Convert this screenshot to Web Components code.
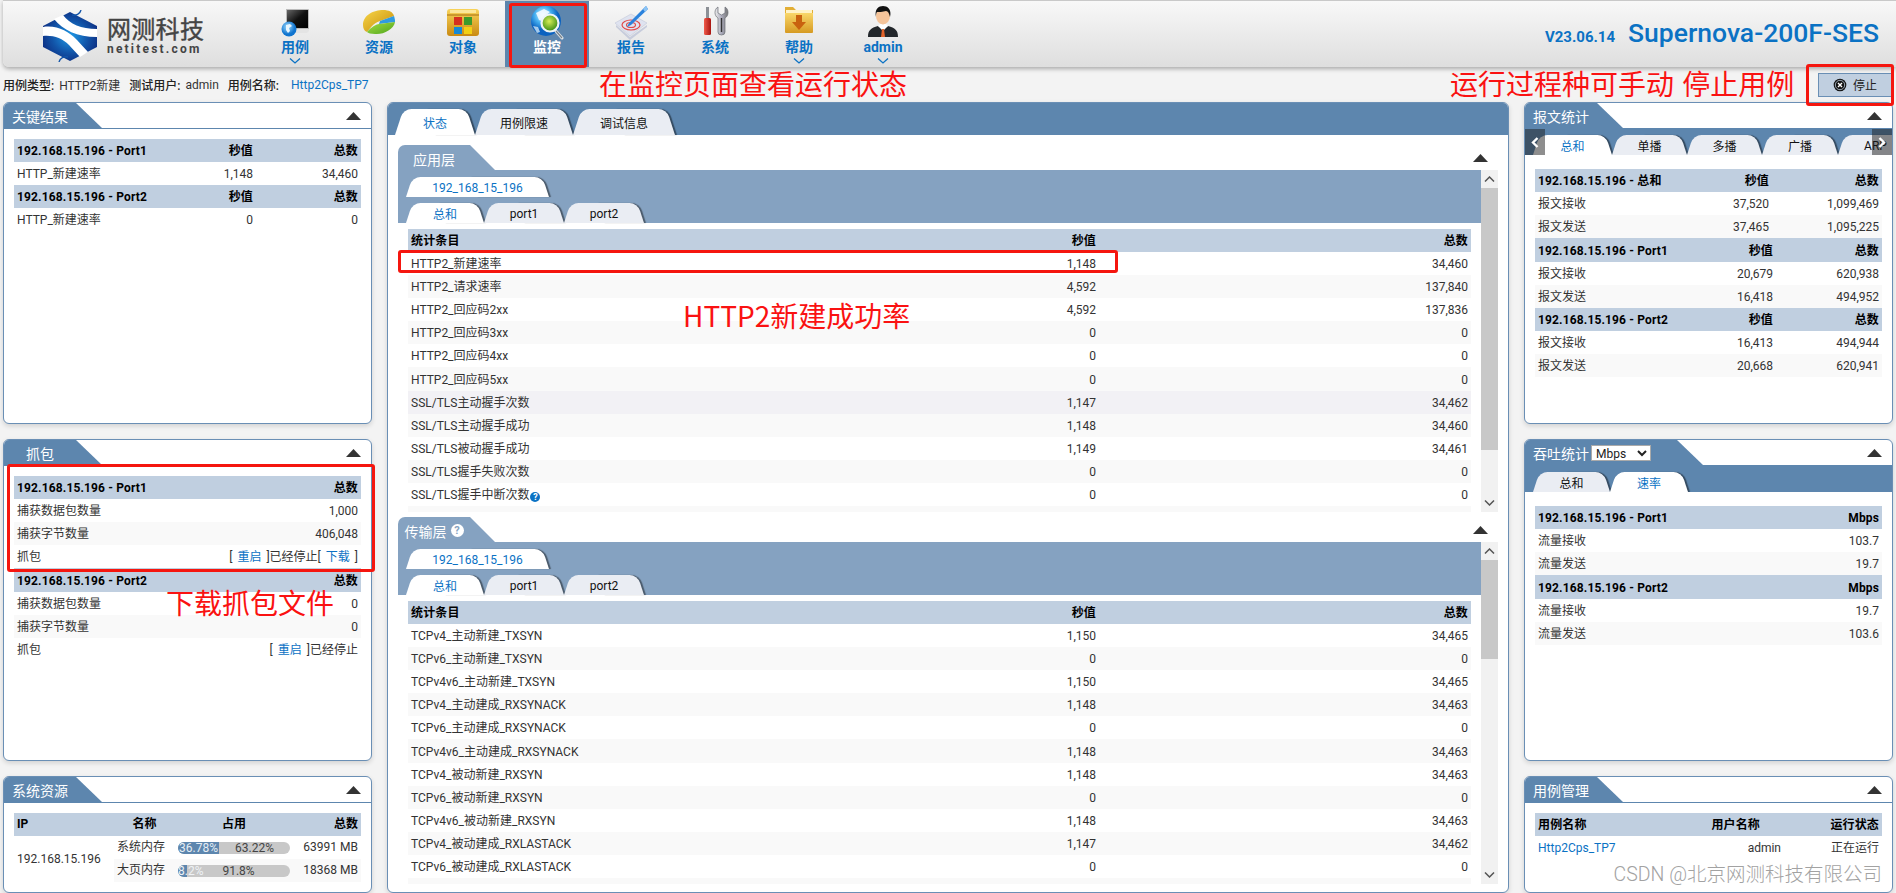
<!DOCTYPE html>
<html lang="zh-CN">
<head>
<meta charset="utf-8">
<title>Supernova</title>
<style>
  html, body { margin: 0; height: 893px; overflow: hidden; }
  body {
    position: relative;
    background: #f3f3f3;
    color: #333;
    font: 12px Roboto, "Noto Sans CJK SC", sans-serif;
  }
  .main {
    display: grid;
    grid-template-columns: 369px 1fr 369px;
    column-gap: 15px;
    padding: 0 3px;
    height: 791px;
  }
  .side {
    display: grid;
    grid-template-rows: 322px 322px 117px;
    row-gap: 15px;
    min-height: 0;
  }
  .tabrow { display: flex; }
  .mbps {
    width: 60px; height: 16px; margin-left: 2px; padding: 0;
    font: 12px Roboto, sans-serif; color: #222; background: #fff;
    border: 1px solid #aaa; border-radius: 0;
  }
</style>
</head>
<body>

<nt-header>
  <nav-item icon="case" label="用例" chevron></nav-item>
  <nav-item icon="pie" label="资源"></nav-item>
  <nav-item icon="box" label="对象"></nav-item>
  <nav-item icon="monitor" label="监控" active></nav-item>
  <nav-item icon="report" label="报告"></nav-item>
  <nav-item icon="tools" label="系统"></nav-item>
  <nav-item icon="folder" label="帮助" chevron></nav-item>
  <nav-item icon="user" label="admin" chevron></nav-item>
</nt-header>

<info-bar></info-bar>

<div class="main">
  <div class="side">
    <nt-panel heading="关键结果">
      <stat-table cols="1fr 60px 105px" rows="#192.168.15.196 - Port1|秒值|总数
HTTP_新建速率|1,148|34,460
#192.168.15.196 - Port2|秒值|总数
HTTP_新建速率|0|0"></stat-table>
    </nt-panel>
    <nt-panel heading="抓包">
      <stat-table cols="1fr 150px" rows="#192.168.15.196 - Port1|总数
捕获数据包数量|1,000
捕获字节数量|406,048
抓包|[<a class=m>重启</a>]已经停止[<a class=m>下载</a>]"></stat-table>
      <stat-table cols="1fr 150px" head-h="24" rows="#192.168.15.196 - Port2|总数
捕获数据包数量|0
捕获字节数量|0
抓包|[<a class=m>重启</a>]已经停止"></stat-table>
    </nt-panel>
    <nt-panel heading="系统资源">
      <sys-table></sys-table>
    </nt-panel>
  </div>

  <nt-tabpanel>
    <nt-tab slot="tabs" big active style="width:80px">状态</nt-tab>
    <nt-tab slot="tabs" big style="width:98px">用例限速</nt-tab>
    <nt-tab slot="tabs" big style="width:102px">调试信息</nt-tab>

    <nt-section heading="应用层">
      <div class="tabrow" slot="tabs"><nt-tab active style="width:143px">192_168_15_196</nt-tab></div>
      <div class="tabrow" slot="tabs">
        <nt-tab active style="width:78px">总和</nt-tab><nt-tab style="width:80px">port1</nt-tab><nt-tab style="width:80px">port2</nt-tab>
      </div>
      <stat-table cols="1fr 60px 372px" row-h="23.1" rows="#统计条目|秒值|总数
HTTP2_新建速率|1,148|34,460
HTTP2_请求速率|4,592|137,840
HTTP2_回应码2xx|4,592|137,836
HTTP2_回应码3xx|0|0
HTTP2_回应码4xx|0|0
HTTP2_回应码5xx|0|0
~SSL/TLS主动握手次数|1,147|34,462
SSL/TLS主动握手成功|1,148|34,460
SSL/TLS被动握手成功|1,149|34,461
SSL/TLS握手失败次数|0|0
SSL/TLS握手中断次数<i>?</i>|0|0
&nbsp;||"></stat-table>
    </nt-section>

    <nt-section heading="传输层" help thumb="99">
      <div class="tabrow" slot="tabs"><nt-tab active style="width:143px">192_168_15_196</nt-tab></div>
      <div class="tabrow" slot="tabs">
        <nt-tab active style="width:78px">总和</nt-tab><nt-tab style="width:80px">port1</nt-tab><nt-tab style="width:80px">port2</nt-tab>
      </div>
      <stat-table cols="1fr 60px 372px" row-h="23.1" rows="#统计条目|秒值|总数
TCPv4_主动新建_TXSYN|1,150|34,465
TCPv6_主动新建_TXSYN|0|0
TCPv4v6_主动新建_TXSYN|1,150|34,465
TCPv4_主动建成_RXSYNACK|1,148|34,463
TCPv6_主动建成_RXSYNACK|0|0
TCPv4v6_主动建成_RXSYNACK|1,148|34,463
TCPv4_被动新建_RXSYN|1,148|34,463
TCPv6_被动新建_RXSYN|0|0
TCPv4v6_被动新建_RXSYN|1,148|34,463
TCPv4_被动建成_RXLASTACK|1,147|34,462
TCPv6_被动建成_RXLASTACK|0|0
&nbsp;||"></stat-table>
    </nt-section>
  </nt-tabpanel>

  <div class="side">
    <nt-panel heading="报文统计" banded>
      <nt-tab slot="band" active style="width:79px">总和</nt-tab>
      <nt-tab slot="band" style="width:75px">单播</nt-tab>
      <nt-tab slot="band" style="width:75px">多播</nt-tab>
      <nt-tab slot="band" style="width:76px">广播</nt-tab>
      <nt-tab slot="band" style="width:75px">ARP</nt-tab>
      <nt-arrow slot="band" dir="left"></nt-arrow>
      <nt-arrow slot="band" dir="right"></nt-arrow>
      <stat-table cols="1fr 60px 110px" rows="#192.168.15.196 - 总和|秒值|总数
报文接收|37,520|1,099,469
报文发送|37,465|1,095,225"></stat-table>
      <stat-table cols="1fr 60px 106px" head-h="24" rows="#192.168.15.196 - Port1|秒值|总数
报文接收|20,679|620,938
报文发送|16,418|494,952"></stat-table>
      <stat-table cols="1fr 60px 106px" rows="#192.168.15.196 - Port2|秒值|总数
报文接收|16,413|494,944
报文发送|20,668|620,941"></stat-table>
    </nt-panel>
    <nt-panel heading="吞吐统计" banded style="--title-w:178px;--title-pr:44px">
      <select slot="extra" class="mbps"><option>Mbps</option></select>
      <nt-tab slot="band" style="width:77px">总和</nt-tab>
      <nt-tab slot="band" active style="width:78px">速率</nt-tab>
      <stat-table cols="1fr 100px" rows="#192.168.15.196 - Port1|Mbps
流量接收|103.7
流量发送|19.7"></stat-table>
      <stat-table cols="1fr 100px" head-h="24" rows="#192.168.15.196 - Port2|Mbps
流量接收|19.7
流量发送|103.6"></stat-table>
    </nt-panel>
    <nt-panel heading="用例管理">
      <stat-table cols="1fr 60px 119px" rows="#用例名称|用户名称|运行状态"></stat-table>
      <stat-table cols="1fr 60px 98px" rows="<a>Http2Cps_TP7</a>|admin|正在运行"></stat-table>
    </nt-panel>
  </div>
</div>

<red-box style="left:509px;top:3px;width:72px;height:59px"></red-box>
<red-box style="left:1806px;top:64px;width:82px;height:36px"></red-box>
<red-box style="left:398px;top:250px;width:714px;height:17px"></red-box>
<red-box style="left:7px;top:464px;width:362px;height:102px"></red-box>

<red-note style="left:599px;top:83px">在监控页面查看运行状态</red-note>
<red-note style="left:1450px;top:83px;word-spacing:2px">运行过程种可手动 停止用例</red-note>
<red-note style="left:683px;top:315px">HTTP2新建成功率</red-note>
<red-note style="left:166px;top:602px">下载抓包文件</red-note>
<water-mark>CSDN @北京网测科技有限公司</water-mark>

<script>
const BLUE = '#5d86ae'
const LINK = '#0b72c4'

const ICONS = {
  case: `<defs><linearGradient id="s" x1="0" y1="0" x2="1" y2="1"><stop offset="0" stop-color="#666"/><stop offset=".5" stop-color="#111"/><stop offset="1" stop-color="#000"/></linearGradient>
      <radialGradient id="g" cx=".4" cy=".35"><stop offset="0" stop-color="#9fdcff"/><stop offset="1" stop-color="#0f74cf"/></radialGradient></defs>
    <path d="M12 29h20l2-2v-3H12z" fill="#e4e4e4"/><path d="M11 5h22q1 0 1 1v19H11z" fill="#bbb"/><path d="M12 6h21v18H12z" fill="url(#s)"/>
    <circle cx="14" cy="25" r="7.5" fill="url(#g)"/><path d="M11 21l4-1 2 2-3 2 1 3-2 2-2-3z" fill="#e8f6ff"/>`,
  pie: `<defs><linearGradient id="y" x1="0" y1="0" x2="1" y2="1"><stop offset="0" stop-color="#f7d64a"/><stop offset="1" stop-color="#c58a06"/></linearGradient>
      <linearGradient id="v" x1="0" y1="0" x2="1" y2="1"><stop offset="0" stop-color="#a6dd45"/><stop offset="1" stop-color="#4ea51a"/></linearGradient></defs>
    <path d="M4 21C4 11 15 6 24 6c6 0 10 2 11 6L21 17c-7 2-11 9-13 11-3-1-4-4-4-7z" fill="url(#y)"/>
    <path d="M35 12c1 3 1 4 1 6l-16 2 1-3z" fill="#2f9be0"/>
    <path d="M20 20l16-2c-1 7-12 13-20 12-4 0-7-1-8-2 2-2 6-7 12-8z" fill="url(#v)"/>`,
  box: `<defs><linearGradient id="b" x1="0" y1="0" x2="0" y2="1"><stop offset="0" stop-color="#f8d35a"/><stop offset="1" stop-color="#c98a12"/></linearGradient></defs>
    <path d="M7 5h26q3 0 3 3v21q0 3-3 3H7q-3 0-3-3V8q0-3 3-3z" fill="url(#b)"/><path d="M4 11h32" stroke="#a66f10" stroke-width="1"/><path d="M7 6h26v3H7z" fill="#fbe79a"/>
    <path d="M11 13h8v8h-8z" fill="#d5301f"/><path d="M21 13h8v8h-8z" fill="#3b9a2b"/><path d="M11 23h8v7h-8z" fill="#1689d6"/><path d="M21 23h8v7h-8z" fill="#f2d015"/>`,
  monitor: `<defs><radialGradient id="g" cx=".4" cy=".3"><stop offset="0" stop-color="#e6f7ff"/><stop offset=".55" stop-color="#45b0f0"/><stop offset="1" stop-color="#0b62c0"/></radialGradient>
      <radialGradient id="l" cx=".45" cy=".4"><stop offset="0" stop-color="#d8ee55"/><stop offset="1" stop-color="#4f9a1c"/></radialGradient></defs>
    <circle cx="19" cy="17" r="15" fill="url(#g)"/><path d="M9 9l8-4 6 3-5 4-1 6-5-2z" fill="#f4fbff" opacity=".9"/><path d="M6 22l5 1 2 5-3 1z" fill="#e6f6ff" opacity=".7"/>
    <path d="M28 26l7 8" stroke="#dfe4e8" stroke-width="3" stroke-linecap="round"/><path d="M29 27l6 7" stroke="#77838c" stroke-width="1.2"/><circle cx="23" cy="19" r="8.5" fill="url(#l)" stroke="#eef4f8" stroke-width="2.2"/>`,
  report: `<path d="M4 19L20 10l16 9-17 13z" fill="#dfe3f0" stroke="#c3c8d8" stroke-width=".6"/><path d="M5 21l14 12 17-12v2L19 36 5 23z" fill="#c7ccdc"/>
    <ellipse cx="20" cy="21" rx="9" ry="5" fill="none" stroke="#e04a4a" stroke-width="1.2"/><ellipse cx="20" cy="21" rx="4.5" ry="2.5" fill="none" stroke="#e04a4a" stroke-width="1.2"/>
    <path d="M35 2l2 3-17 16-4 2 2-4z" fill="#2b82dc"/><path d="M35 2l2 3-3 3-2-3z" fill="#8cc4f5"/>`,
  tools: `<defs><linearGradient id="m" x1="0" x2="1"><stop offset="0" stop-color="#eee"/><stop offset=".5" stop-color="#aab"/><stop offset="1" stop-color="#777"/></linearGradient>
      <linearGradient id="r" x1="0" x2="1"><stop offset="0" stop-color="#f05a4a"/><stop offset="1" stop-color="#a81410"/></linearGradient></defs>
    <rect x="11" y="3" width="3" height="12" fill="#8c9096"/><rect x="9" y="14" width="7" height="17" rx="1.5" fill="url(#r)"/>
    <path d="M23 3c-4 2-4 9 0 11v14q0 3 3.5 3t3.5-3V14c4-2 4-9 0-11v6l-3.5 2-3.5-2z" fill="url(#m)" stroke="#6a6f76" stroke-width=".7"/><path d="M26.5 14v14" stroke="#333" stroke-width="1.4"/>`,
  folder: `<defs><linearGradient id="f" x1="0" y1="0" x2="0" y2="1"><stop offset="0" stop-color="#f9d76a"/><stop offset="1" stop-color="#d69a22"/></linearGradient></defs>
    <path d="M6 3h8l3 3h17v6H6z" fill="#e2ae35"/><path d="M7 6h26v5H7z" fill="#fff3c8"/><path d="M6 9h28v19q0 1-1 1H7q-1 0-1-1z" fill="url(#f)"/>
    <path d="M17 11h6v7h4l-7 8-7-8h4z" fill="#c9620f"/>`,
  user: `<path d="M5 33c0-7 3-9 10-11l5 3 5-3c7 2 10 4 10 11z" fill="#23272b"/><path d="M15 22l5 5 5-5-2-2h-6z" fill="#fff"/><path d="M19 25h2l1 8h-4z" fill="#e2632a"/>
    <ellipse cx="20" cy="12" rx="7" ry="8.5" fill="#f5c49a"/><path d="M13 13c-2-8 3-11 7-11s9 3 7 11c-1-4-2-6-4-6-3 1-8 1-9 1-1 1-1 3-1 5z" fill="#111"/>`
}

class NavItem extends HTMLElement {
  constructor() {
    super()
    this.attachShadow({mode: 'open'})
  }
  connectedCallback() {
    const chevron = this.hasAttribute('chevron')
      ? `<svg class="chev" width="12" height="6" viewBox="0 0 12 6"><path d="M1 .5l5 4.5 5-4.5" fill="none" stroke="${LINK}" stroke-width="1.3"/></svg>` : ''
    this.shadowRoot.innerHTML = `
      <style>
        :host { display: block; position: relative; width: 84px; height: 66px; text-align: center; color: ${LINK}; }
        :host([active]) { background: ${BLUE}; color: #fff; }
        .icon { display: block; margin: 3px auto 0; }
        .label { display: block; margin-top: -2px; font-size: 14px; font-weight: 700; line-height: 19px; }
        .chev { display: block; margin: 1px auto 0; }
      </style>
      <svg class="icon" width="40" height="36" viewBox="0 0 40 36">${ICONS[this.getAttribute('icon')]}</svg>
      <span class="label">${this.getAttribute('label')}</span>${chevron}`
  }
}

class NtHeader extends HTMLElement {
  constructor() {
    super()
    this.attachShadow({mode: 'open'})
    this.shadowRoot.innerHTML = `
      <style>
        :host {
          display: flex; position: relative; z-index: 1; height: 66px; margin-left: 3px;
          background: linear-gradient(#f8f8f8, #dedede);
          border-top: 1px solid #c9c9c9; border-bottom-left-radius: 6px;
          box-shadow: 0 2px 4px rgba(0,0,0,.3);
        }
        .logo { display: flex; flex: none; width: 210px; padding: 9px 0 0 40px; }
        .logo svg { flex: none; }
        .brand { margin-left: 10px; color: #444; }
        .cn { font: 400 24px/26px "Noto Sans CJK SC", sans-serif; letter-spacing: .3px; margin-top: 5px; white-space: nowrap; -webkit-text-stroke: .4px #444; }
        .en { font: 700 12px/12px Roboto, sans-serif; letter-spacing: 2.2px; margin-top: 2px; white-space: nowrap; }
        nav { display: flex; }
        .ver { margin-left: auto; padding: 16px 17px 0 0; color: ${LINK}; white-space: nowrap; font-family: Roboto, sans-serif; }
        .ver b { font-size: 15px; margin-right: 13px; }
        .ver span { font-size: 26.5px; font-weight: 500; }
      </style>
      <div class="logo">
        <svg width="54" height="52" viewBox="0 0 54 52">
          <defs><radialGradient id="h" cx=".5" cy=".5" r=".55"><stop offset="0" stop-color="#1f9ce8"/><stop offset=".6" stop-color="#1254a8"/><stop offset="1" stop-color="#0d2f83"/></radialGradient></defs>
          <path d="M27 2l27 14v21L27 51 0 37V16z" fill="url(#h)"/>
          <path d="M0 17c14-2 25 4 34 13l11 12-8 5-11-12C19 28 10 25 0 26z" fill="#fff"/>
          <path d="M11 9l9-4c7 9 18 14 34 14v8C34 27 20 20 11 9z" fill="#fff"/>
          <path d="M29 5c4 1 8-1 9-5M25 47c-4-1-8 1-9 5" fill="none" stroke="#1254a8" stroke-width="1.4"/>
        </svg>
        <div class="brand"><div class="cn">网测科技</div><div class="en">netitest.com</div></div>
      </div>
      <nav><slot></slot></nav>
      <div class="ver"><b>V23.06.14</b><span>Supernova-200F-SES</span></div>`
  }
}

class InfoBar extends HTMLElement {
  constructor() {
    super()
    this.attachShadow({mode: 'open'})
    this.shadowRoot.innerHTML = `
      <style>
        :host { display: flex; align-items: center; height: 35px; padding: 0 4px 0 3px; font-size: 12px; color: #333; white-space: nowrap; }
        b { font-weight: 500; color: #222; }
        span { margin-left: 5px; }
        .next { margin-left: 9px; }
        a { margin-left: 12px; color: ${LINK}; }
        button {
          display: flex; align-items: center; gap: 6px; margin-left: auto; width: 74px; height: 24px; padding: 0 0 0 14px;
          background: #c0cfe0; border: 1px solid #6a8fb5; color: #222; font: 12px Roboto, "Noto Sans CJK SC", sans-serif;
        }
      </style>
      <b>用例类型:</b><span>HTTP2新建</span>
      <b class="next">测试用户:</b><span>admin</span>
      <b class="next">用例名称:</b><a>Http2Cps_TP7</a>
      <button>
        <svg width="14" height="14" viewBox="0 0 14 14"><circle cx="7" cy="7" r="6.3" fill="#111"/><circle cx="7" cy="7" r="4.7" fill="none" stroke="#c0cfe0" stroke-width=".8"/><path d="M5 5l4 4m0-4l-4 4" stroke="#fff" stroke-width="1.4"/></svg>
        停止
      </button>`
  }
}

const TRIANGLE = `<svg class="tri" width="15" height="8" viewBox="0 0 15 8"><path d="M7.5 0L15 8H0z" fill="#333"/></svg>`

class NtPanel extends HTMLElement {
  constructor() {
    super()
    this.attachShadow({mode: 'open'})
  }
  connectedCallback() {
    this.shadowRoot.innerHTML = `
      <style>
        :host {
          display: flex; flex-direction: column; min-height: 0; overflow: hidden; box-sizing: border-box;
          background: #fff; border: 1px solid #6a8fb5; border-radius: 6px;
          box-shadow: 0 2px 5px rgba(0,0,0,.14);
        }
        .head { display: flex; justify-content: space-between; align-items: center; height: 25px; flex: none; padding-right: 10px; }
        .title {
          display: flex; align-items: center; justify-content: center; box-sizing: border-box;
          width: var(--title-w, 98px); height: 25px; padding-right: var(--title-pr, 26px);
          background: ${BLUE}; color: #fff; font-size: 14px; white-space: nowrap;
          clip-path: polygon(0 0, calc(100% - 26px) 0, 100% 100%, 0 100%);
        }
        .band { position: relative; display: flex; align-items: flex-end; min-height: 1px; flex: none; background: ${BLUE}; overflow: hidden; }
        :host([banded]) .band { height: 27px; padding-left: 8px; }
        .body { flex: 1; padding: 10px 10px 0; }
        :host([banded]) .body { padding-top: 14px; }
      </style>
      <div class="head"><div class="title">${this.getAttribute('heading')}<slot name="extra"></slot></div>${TRIANGLE}</div>
      <div class="band"><slot name="band"></slot></div>
      <div class="body"><slot></slot></div>`
  }
}

class NtTab extends HTMLElement {
  constructor() {
    super()
    this.attachShadow({mode: 'open'})
    this.shadowRoot.innerHTML = `
      <style>
        :host {
          display: inline-flex; flex: none; position: relative; z-index: 0; box-sizing: border-box;
          align-items: center; justify-content: center; height: 20px; padding-top: 1px; font-size: 12px; color: #111;
          --tab-bg: #eaedf3;
        }
        :host([big]) { height: 26px; padding-top: 0; }
        :host([active]) { color: ${LINK}; --tab-bg: #fff; }
        i { position: absolute; top: 0; bottom: 0; z-index: -1; background: var(--tab-bg); }
        .l { left: 0; right: 50%; transform: skewX(-18deg); transform-origin: bottom left; border-top-left-radius: 8px; }
        .r { left: 49%; right: 0; transform: skewX(18deg); transform-origin: bottom right; border-top-right-radius: 8px; box-shadow: 2px 0 1px rgba(0,0,0,.45); }
      </style>
      <i class="r"></i><i class="l"></i><slot></slot>`
  }
}

class NtArrow extends HTMLElement {
  constructor() {
    super()
    this.attachShadow({mode: 'open'})
  }
  connectedCallback() {
    const left = this.getAttribute('dir') === 'left'
    this.shadowRoot.innerHTML = `
      <style>
        :host {
          position: absolute; top: 1px; bottom: 0; ${left ? 'left:0' : 'right:0'}; width: 20px; z-index: 2;
          display: flex; justify-content: center; padding-top: 8px; box-sizing: border-box;
          background: rgba(30,30,30,.5);
        }
      </style>
      <svg width="8" height="11" viewBox="0 0 8 11"><path d="${left ? 'M6.5 1L2 5.5 6.5 10' : 'M1.5 1L6 5.5 1.5 10'}" fill="none" stroke="#fff" stroke-width="2.4"/></svg>`
  }
}

class StatTable extends HTMLElement {
  constructor() {
    super()
    this.attachShadow({mode: 'open'})
  }
  connectedCallback() {
    const rows = this.getAttribute('rows').split('\n')
    let plain = 0
    const html = rows.map(line => {
      let cls = 'row'
      if (line[0] === '#') { cls += ' head'; line = line.slice(1); plain = 0 }
      else {
        plain++
        if (line[0] === '~') { cls += ' tint'; line = line.slice(1) }
        else if (plain % 2 === 0) cls += ' alt'
      }
      return `<div class="${cls}">${line.split('|').map(c => `<div>${c}</div>`).join('')}</div>`
    }).join('')
    this.shadowRoot.innerHTML = `
      <style>
        :host { display: block; font-size: 12px; color: #333; }
        .row {
          display: grid; grid-template-columns: ${this.getAttribute('cols')}; align-items: center; box-sizing: border-box;
          height: ${this.getAttribute('row-h') || 23}px; padding: 2px 3px 0; white-space: nowrap; line-height: 21px;
        }
        .row > div { text-align: right; }
        .row > div:first-child { text-align: left; }
        .head { height: ${this.getAttribute('head-h') || 23}px; background: #c0cfe0; color: #000; font-weight: 700; letter-spacing: .14px; }
        .alt { background: #f9f9f9; }
        .tint { background: #f2f1f5; }
        a { color: ${LINK}; }
        a.m { margin: 0 5px; }
        i {
          display: inline-block; width: 10px; height: 10px; margin-left: 1px; border-radius: 50%; vertical-align: -1px;
          background: ${LINK}; color: #fff; font: 700 9px/10px Roboto, sans-serif; text-align: center;
        }
      </style>${html}`
  }
}

class SysTable extends HTMLElement {
  constructor() {
    super()
    this.attachShadow({mode: 'open'})
    this.shadowRoot.innerHTML = `
      <style>
        :host { display: block; font-size: 12px; color: #333; white-space: nowrap; }
        .grid { display: grid; grid-template-columns: 100px 61px 118px 1fr; grid-auto-rows: 23px; align-items: center; }
        .h { height: 23px; line-height: 23px; background: #c0cfe0; color: #000; font-weight: 700; text-align: center; }
        .ip { grid-row: span 2; padding-left: 3px; }
        .c { height: 23px; line-height: 23px; padding-left: 3px; }
        .t { height: 23px; line-height: 23px; padding-right: 3px; text-align: right; }
        .bh { height: 23px; display: flex; align-items: center; padding-top: 1px; box-sizing: border-box; }
        .alt { background: #f9f9f9; }
        .bar { position: relative; display: flex; width: 112px; height: 12px; margin-left: 3px; border-radius: 6px; background: #c8c8c8; overflow: hidden; line-height: 12px; font-size: 12px; }
        .bar b { flex: none; background: #5d86ae; font-weight: 400; color: #e6edf4; text-align: center; }
        .bar span { flex: 1; text-align: center; color: #444; }
        .small { position: absolute; left: 0; top: 0; color: #eef2f6; font-style: normal; }
      </style>
      <div class="grid">
        <div class="h" style="text-align:left;padding-left:3px">IP</div><div class="h">名称</div><div class="h">占用</div><div class="h" style="text-align:right;padding-right:3px">总数</div>
        <div class="ip">192.168.15.196</div>
        <div class="c">系统内存</div><div class="bh"><div class="bar"><b style="width:41px">36.78%</b><span>63.22%</span></div></div><div class="t">63991 MB</div>
        <div class="c alt">大页内存</div><div class="bh alt"><div class="bar"><b style="width:9px"></b><span>91.8%</span><em class="small">8.2%</em></div></div><div class="t alt">18368 MB</div>
      </div>`
  }
}

class NtTabpanel extends HTMLElement {
  constructor() {
    super()
    this.attachShadow({mode: 'open'})
    this.shadowRoot.innerHTML = `
      <style>
        :host {
          display: flex; flex-direction: column; box-sizing: border-box; min-height: 0; overflow: hidden;
          background: #fff; border: 1px solid #6a8fb5; border-radius: 6px; box-shadow: 0 2px 5px rgba(0,0,0,.14);
        }
        .tabs { display: flex; align-items: flex-end; flex: none; height: 32px; padding-left: 7px; background: ${BLUE}; }
        .body { display: flex; flex-direction: column; gap: 5px; padding: 10px 10px 0; }
      </style>
      <div class="tabs"><slot name="tabs"></slot></div>
      <div class="body"><slot></slot></div>`
  }
}

class NtSection extends HTMLElement {
  constructor() {
    super()
    this.attachShadow({mode: 'open'})
  }
  connectedCallback() {
    const help = this.hasAttribute('help') ? '<i>?</i>' : ''
    const thumb = this.getAttribute('thumb') || 262
    this.shadowRoot.innerHTML = `
      <style>
        :host { display: block; }
        .head { display: flex; justify-content: space-between; align-items: center; height: 25px; padding-right: 10px; }
        .title {
          display: flex; align-items: center; justify-content: center; gap: 4px; box-sizing: border-box;
          width: 97px; height: 25px; padding: 2px 25px 0 0; background: #85a2c1; color: #fff; font-size: 14px; white-space: nowrap;
          border-top-left-radius: 7px; clip-path: polygon(0 0, calc(100% - 25px) 0, 100% 100%, 0 100%);
        }
        i {
          flex: none; width: 13px; height: 13px; border-radius: 50%; background: #fff; color: #85a2c1;
          font: 700 11px/13px Roboto, sans-serif; text-align: center;
        }
        .body { display: flex; height: 342px; }
        .content { flex: 1; min-width: 0; overflow: hidden; }
        .band { display: flex; flex-direction: column; gap: 6px; height: 46px; padding: 7px 0 0 8px; background: #85a2c1; }
        .table { padding: 6px 10px 0; }
        .scroll { display: flex; flex-direction: column; flex: none; width: 17px; background: #f1f1f1; }
        .btn { display: flex; align-items: center; justify-content: center; flex: none; height: 18px; }
        .thumb { flex: none; background: #c8c8c8; }
        .rest { flex: 1; }
      </style>
      <div class="head"><div class="title">${this.getAttribute('heading')}${help}</div>${TRIANGLE}</div>
      <div class="body">
        <div class="content">
          <div class="band"><slot name="tabs"></slot></div>
          <div class="table"><slot></slot></div>
        </div>
        <div class="scroll">
          <div class="btn"><svg width="11" height="6" viewBox="0 0 11 6"><path d="M1 5.5l4.5-4.5 4.5 4.5" fill="none" stroke="#555" stroke-width="1.5"/></svg></div>
          <div class="thumb" style="height:${thumb}px"></div><div class="rest"></div>
          <div class="btn"><svg width="11" height="6" viewBox="0 0 11 6"><path d="M1 .5l4.5 4.5 4.5-4.5" fill="none" stroke="#555" stroke-width="1.5"/></svg></div>
        </div>
      </div>`
  }
}

// annotations drawn on top of the screenshot
class RedBox extends HTMLElement {
  constructor() {
    super()
    this.attachShadow({mode: 'open'})
    this.shadowRoot.innerHTML = `<style>:host { position: absolute; z-index: 5; border: 3px solid #f5160f; border-radius: 3px; }</style>`
  }
}

class RedNote extends HTMLElement {
  constructor() {
    super()
    this.attachShadow({mode: 'open'})
    this.shadowRoot.innerHTML = `
      <style>
        :host {
          position: absolute; z-index: 6; transform: translateY(-50%); white-space: nowrap;
          color: #fa1212; font: 400 28px/36px "Noto Sans CJK SC", sans-serif;
        }
      </style><slot></slot>`
  }
}

class WaterMark extends HTMLElement {
  constructor() {
    super()
    this.attachShadow({mode: 'open'})
    this.shadowRoot.innerHTML = `
      <style>
        :host {
          position: absolute; z-index: 6; right: 14px; top: 862px; white-space: nowrap;
          color: #a2a2a2; font: 300 19.5px/26px Roboto, "Noto Sans CJK SC", sans-serif;
        }
      </style><slot></slot>`
  }
}

window.customElements.define('nav-item', NavItem)
window.customElements.define('nt-header', NtHeader)
window.customElements.define('info-bar', InfoBar)
window.customElements.define('nt-panel', NtPanel)
window.customElements.define('nt-tab', NtTab)
window.customElements.define('nt-arrow', NtArrow)
window.customElements.define('stat-table', StatTable)
window.customElements.define('sys-table', SysTable)
window.customElements.define('nt-tabpanel', NtTabpanel)
window.customElements.define('nt-section', NtSection)
window.customElements.define('red-box', RedBox)
window.customElements.define('red-note', RedNote)
window.customElements.define('water-mark', WaterMark)
</script>
</body>
</html>
